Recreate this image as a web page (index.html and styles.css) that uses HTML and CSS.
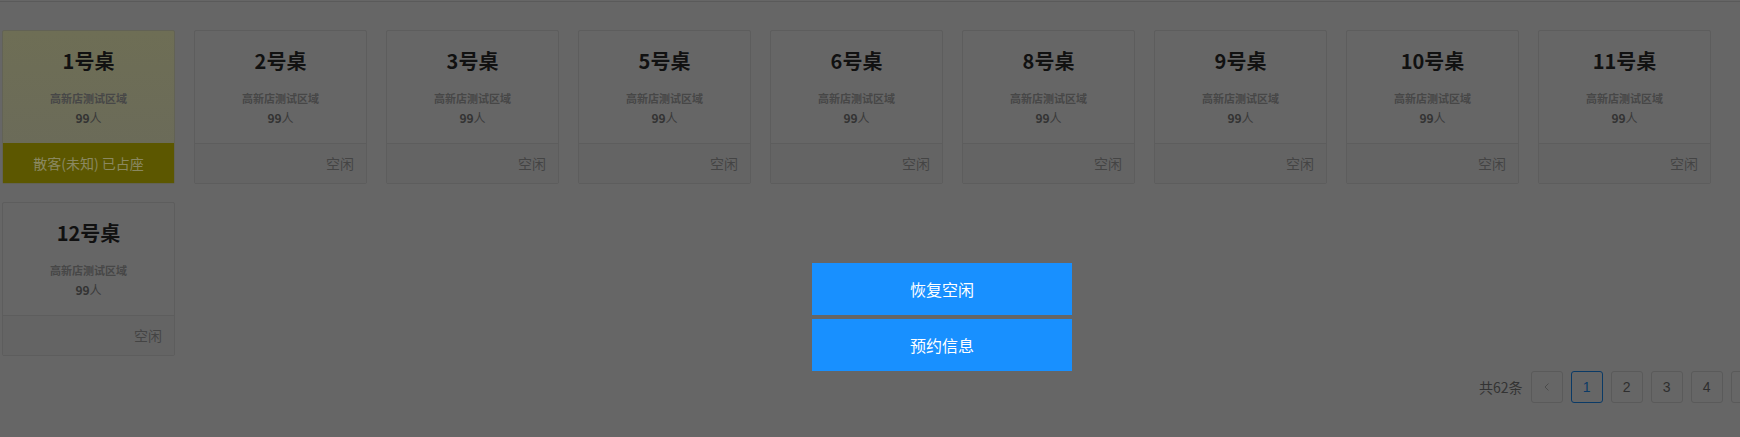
FILE: index.html
```html
<!DOCTYPE html>
<html lang="zh-CN">
<head>
<meta charset="utf-8">
<title>桌台</title>
<link rel="stylesheet" href="styles.css">
</head>
<body>
<div class="page">
  <div class="topline"></div>
  <div class="grid">
    <div class="card busy">
      <div class="card-body">
        <div class="title">1号桌</div>
        <div class="area">高新店测试区域</div>
        <div class="count">99<span class="unit">人</span></div>
      </div>
      <div class="card-foot">散客(未知) 已占座</div>
    </div>
    <div class="card">
      <div class="card-body"><div class="title">2号桌</div><div class="area">高新店测试区域</div><div class="count">99<span class="unit">人</span></div></div>
      <div class="card-foot">空闲</div>
    </div>
    <div class="card">
      <div class="card-body"><div class="title">3号桌</div><div class="area">高新店测试区域</div><div class="count">99<span class="unit">人</span></div></div>
      <div class="card-foot">空闲</div>
    </div>
    <div class="card">
      <div class="card-body"><div class="title">5号桌</div><div class="area">高新店测试区域</div><div class="count">99<span class="unit">人</span></div></div>
      <div class="card-foot">空闲</div>
    </div>
    <div class="card">
      <div class="card-body"><div class="title">6号桌</div><div class="area">高新店测试区域</div><div class="count">99<span class="unit">人</span></div></div>
      <div class="card-foot">空闲</div>
    </div>
    <div class="card">
      <div class="card-body"><div class="title">8号桌</div><div class="area">高新店测试区域</div><div class="count">99<span class="unit">人</span></div></div>
      <div class="card-foot">空闲</div>
    </div>
    <div class="card">
      <div class="card-body"><div class="title">9号桌</div><div class="area">高新店测试区域</div><div class="count">99<span class="unit">人</span></div></div>
      <div class="card-foot">空闲</div>
    </div>
    <div class="card">
      <div class="card-body"><div class="title">10号桌</div><div class="area">高新店测试区域</div><div class="count">99<span class="unit">人</span></div></div>
      <div class="card-foot">空闲</div>
    </div>
    <div class="card">
      <div class="card-body"><div class="title">11号桌</div><div class="area">高新店测试区域</div><div class="count">99<span class="unit">人</span></div></div>
      <div class="card-foot">空闲</div>
    </div>
    <div class="card">
      <div class="card-body"><div class="title">12号桌</div><div class="area">高新店测试区域</div><div class="count">99<span class="unit">人</span></div></div>
      <div class="card-foot">空闲</div>
    </div>
  </div>
  <div class="pager">
    <span class="total">共62条</span>
    <span class="pg prev"><svg width="12" height="12" viewBox="0 0 12 12"><path d="M7.5 2.5 L4 6 L7.5 9.5" fill="none" stroke="#4c4c4c" stroke-width="1"/></svg></span>
    <span class="pg active">1</span>
    <span class="pg">2</span>
    <span class="pg">3</span>
    <span class="pg">4</span>
    <span class="pg">5</span>
  </div>
</div>
<div class="menu">
  <div class="menu-btn">恢复空闲</div>
  <div class="menu-btn">预约信息</div>
</div>
</body>
</html>
```

FILE: styles.css
```css
html, body {
  margin: 0;
  padding: 0;
  background: #666666;
  overflow: hidden;
}
body {
  font-family: "Noto Sans CJK SC", "Noto Sans", sans-serif;
  width: 1740px;
  height: 437px;
  position: relative;
}
.page {
  width: 1740px;
}
.topline {
  height: 1px;
  margin-top: 1px;
  background: #5a5a5a;
}
.grid {
  display: grid;
  grid-template-columns: repeat(9, 173px);
  column-gap: 19px;
  row-gap: 18px;
  padding: 28px 0 0 2px;
}
.card {
  box-sizing: border-box;
  border: 1px solid #5d5d5d;
  border-radius: 2px;
  background: #666666;
  display: flex;
  flex-direction: column;
}
.card-body {
  padding: 16px 0 15px;
  text-align: center;
}
.title {
  font-size: 20px;
  line-height: 28px;
  font-weight: 700;
  color: #111111;
  margin-bottom: 13px;
}
.area {
  font-size: 11px;
  line-height: 20px;
  font-weight: 700;
  color: #474747;
}
.count {
  font-size: 12px;
  line-height: 20px;
  font-weight: 700;
  color: #333333;
}
.unit {
  font-weight: 400;
  color: #3a3a3a;
}
.card-foot {
  border-top: 1px solid #5d5d5d;
  height: 39px;
  line-height: 39px;
  font-size: 14px;
  color: #444444;
  text-align: right;
  padding-right: 12px;
  background: #646464;
}
.card.busy {
  background: linear-gradient(#6e6e55, #6a6a5a);
  border-color: #626255;
}
.card.busy .card-foot {
  background: #5c5700;
  border-top-color: #5c5700;
  color: #8a8860;
  text-align: center;
  padding-right: 0;
}
.pager {
  display: flex;
  align-items: center;
  margin-top: 15px;
  padding-left: 1479px;
  white-space: nowrap;
}
.total {
  font-size: 14px;
  line-height: 32px;
  color: #333333;
  margin-right: 8px;
}
.pg {
  box-sizing: border-box;
  flex: 0 0 32px;
  width: 32px;
  height: 32px;
  margin-right: 8px;
  border: 1px solid #5a5a5a;
  border-radius: 3px;
  display: flex;
  align-items: center;
  justify-content: center;
  font-family: "Liberation Sans", Arial, sans-serif;
  font-size: 14px;
  color: #2e2e2e;
}
.pg.active {
  border-color: #0a3a66;
  color: #0a3a66;
}
.menu {
  position: absolute;
  left: 812px;
  top: 263px;
  width: 260px;
  display: flex;
  flex-direction: column;
  gap: 4px;
}
.menu-btn {
  height: 52px;
  line-height: 52px;
  background: #1890ff;
  color: #ffffff;
  font-size: 16px;
  text-align: center;
}
```
